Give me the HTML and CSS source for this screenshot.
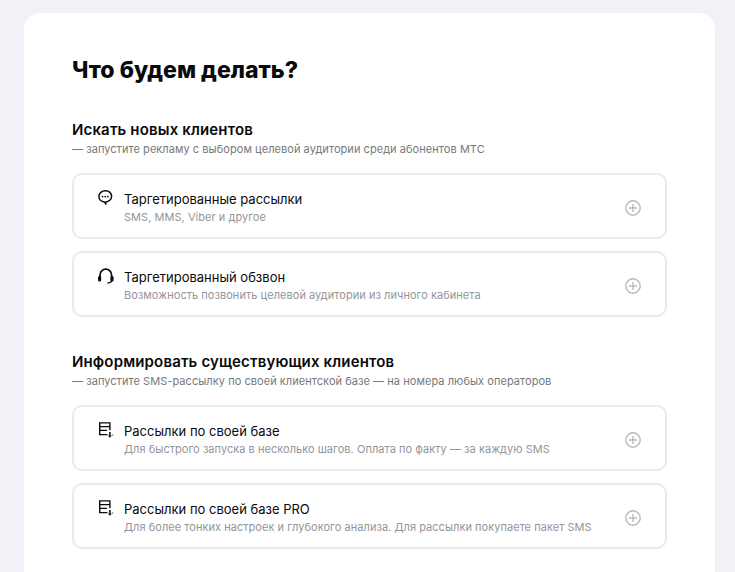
FILE: index.html
```html
<!DOCTYPE html>
<html lang="ru">
<head>
<meta charset="utf-8">
<title>Что будем делать?</title>
<link rel="stylesheet" href="styles.css">
</head>
<body>
<main class="panel">
  <h1 class="title">Что будем делать?</h1>
  <section class="group">
    <h2 class="group-title">Искать новых клиентов</h2>
    <p class="group-sub">— запустите рекламу с выбором целевой аудитории среди абонентов МТС</p>
    <div class="option">
      <svg class="icon" viewBox="0 0 16 17" fill="none" stroke="#0a0a0a" stroke-width="1.5"><path d="M7.5.8C3.8.8.9 3.2.9 6.5c0 2.9 2.3 5.2 5.4 5.4l1.5 2.2v-2.2c3-.2 5.8-2.5 5.8-5.4C13.6 3.2 11.2.8 7.5.8z" stroke-linejoin="round"/><g fill="#0a0a0a" stroke="none"><circle cx="4.5" cy="6.6" r=".9"/><circle cx="7.2" cy="6.6" r=".9"/><circle cx="9.9" cy="6.6" r=".9"/></g></svg>
      <div class="option-text">
        <div class="option-name">Таргетированные рассылки</div>
        <div class="option-desc">SMS, MMS, Viber и другое</div>
      </div>
      <svg class="plus" viewBox="0 0 16 16" fill="none" stroke="#b8b9bd" stroke-width="1.4"><circle cx="8" cy="8" r="7.2"/><path d="M8 4v8M4 8h8"/></svg>
    </div>
    <div class="option">
      <svg class="icon" viewBox="0 0 16 17" fill="none" stroke="#0a0a0a" stroke-width="1.7"><path d="M2 9V7a5.8 5.8 0 0 1 11.6 0v2"/><path d="M14 12c-.3 2-1.8 3-4.6 3" stroke-width="1.4"/><rect x="0" y="8" width="3.2" height="5.4" rx="1.5" fill="#0a0a0a" stroke="none"/><rect x="12.4" y="8" width="3.2" height="5.4" rx="1.5" fill="#0a0a0a" stroke="none"/></svg>
      <div class="option-text">
        <div class="option-name">Таргетированный обзвон</div>
        <div class="option-desc">Возможность позвонить целевой аудитории из личного кабинета</div>
      </div>
      <svg class="plus" viewBox="0 0 16 16" fill="none" stroke="#b8b9bd" stroke-width="1.4"><circle cx="8" cy="8" r="7.2"/><path d="M8 4v8M4 8h8"/></svg>
    </div>
  </section>
  <section class="group">
    <h2 class="group-title">Информировать существующих клиентов</h2>
    <p class="group-sub">— запустите SMS-рассылку по своей клиентской базе — на номера любых операторов</p>
    <div class="option">
      <svg class="icon" viewBox="0 0 16 17" fill="none" stroke="#0a0a0a" stroke-width="1.4"><path d="M9.5 12.6H1.7V.9h10.2v7.4"/><path d="M1.7 4.6h10.2M1.7 8.4h7.3"/><path d="M11.9 10v3.8" stroke-width="1.5"/><path d="M9.9 13.4h4l-2 2.4z" fill="#0a0a0a" stroke="none"/><circle cx="14.7" cy="13" r=".6" fill="#0a0a0a" stroke="none"/></svg>
      <div class="option-text">
        <div class="option-name">Рассылки по своей базе</div>
        <div class="option-desc">Для быстрого запуска в несколько шагов. Оплата по факту — за каждую SMS</div>
      </div>
      <svg class="plus" viewBox="0 0 16 16" fill="none" stroke="#b8b9bd" stroke-width="1.4"><circle cx="8" cy="8" r="7.2"/><path d="M8 4v8M4 8h8"/></svg>
    </div>
    <div class="option">
      <svg class="icon" viewBox="0 0 16 17" fill="none" stroke="#0a0a0a" stroke-width="1.4"><path d="M9.5 12.6H1.7V.9h10.2v7.4"/><path d="M1.7 4.6h10.2M1.7 8.4h7.3"/><path d="M11.9 10v3.8" stroke-width="1.5"/><path d="M9.9 13.4h4l-2 2.4z" fill="#0a0a0a" stroke="none"/><circle cx="14.7" cy="13" r=".6" fill="#0a0a0a" stroke="none"/></svg>
      <div class="option-text">
        <div class="option-name">Рассылки по своей базе PRO</div>
        <div class="option-desc">Для более тонких настроек и глубокого анализа. Для рассылки покупаете пакет SMS</div>
      </div>
      <svg class="plus" viewBox="0 0 16 16" fill="none" stroke="#b8b9bd" stroke-width="1.4"><circle cx="8" cy="8" r="7.2"/><path d="M8 4v8M4 8h8"/></svg>
    </div>
  </section>
</main>
</body>
</html>
```
FILE: styles.css
```css
html, body {
  margin: 0;
  height: 572px;
  overflow: hidden;
  background: #f1f2f8;
}
body {
  padding: 13px 20px 0 24px;
  box-sizing: border-box;
  font-family: "Inter", "Liberation Sans", sans-serif;
  color: #0a0a0a;
}
.panel {
  background: #fff;
  border-radius: 16px 16px 0 0;
  padding: 42px 48px 0;
  height: 559px;
  box-sizing: border-box;
}
.title {
  margin: 0 0 35px;
  font-size: 23.1px;
  line-height: 30px;
  font-weight: 800;
}
.group { margin-bottom: 35px; }
.group-title {
  margin: 0;
  font-size: 15px;
  line-height: 20px;
  font-weight: 600;
  letter-spacing: .15px;
}
.group-sub {
  margin: 1px 0 16px;
  font-size: 11px;
  line-height: 16px;
  letter-spacing: .05px;
  color: #77787c;
}
.option {
  box-sizing: border-box;
  height: 66px;
  margin-top: 12px;
  padding: 15px 24px 0 24px;
  border: 2px solid #e9e9f4;
  border-radius: 10px;
  display: flex;
  align-items: flex-start;
}
.icon {
  flex: none;
  width: 16px;
  height: 17px;
  margin-right: 10px;
}
.option-text { flex: 1; }
.option-name {
  font-size: 13px;
  line-height: 19px;
}
.option-desc {
  font-size: 11px;
  line-height: 16px;
  letter-spacing: .04px;
  color: #94959a;
}
.plus {
  flex: none;
  width: 16px;
  height: 16px;
  margin-top: 10px;
}
```
